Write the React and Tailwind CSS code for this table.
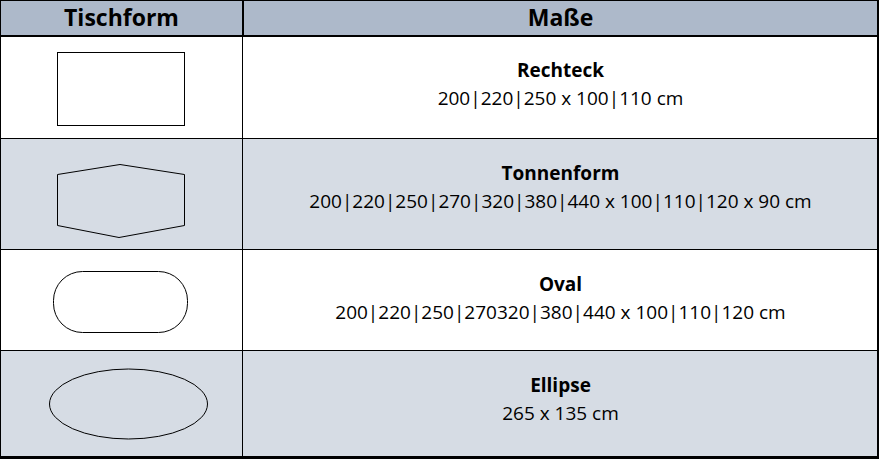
export default function App() {
  const rows = [
    { name: 'Rechteck', size: '200|220|250 x 100|110 cm', bg: 'bg-white', h: 'h-[102px]', svgH: 101, pb: 'pb-[7px]', shape: 'rect' },
    { name: 'Tonnenform', size: '200|220|250|270|320|380|440 x 100|110|120 x 90 cm', bg: 'bg-[#d6dce4]', h: 'h-[111px]', svgH: 110, pb: 'pb-[15px]', shape: 'barrel' },
    { name: 'Oval', size: '200|220|250|270320|380|440 x 100|110|120 cm', bg: 'bg-white', h: 'h-[101px]', svgH: 100, pb: 'pb-[5px]', shape: 'oval' },
    { name: 'Ellipse', size: '265 x 135 cm', bg: 'bg-[#d6dce4]', h: 'h-[105px]', svgH: 105, pb: 'pb-[9px]', shape: 'ellipse' },
  ];

  const Shape = ({ type, h }) => (
    <svg width="241" height={h} className="block">
      {type === 'rect' && <rect x="56.5" y="15.5" width="127" height="73" fill="none" stroke="#000" />}
      {type === 'barrel' && (
        <polygon points="56.5,35.5 119,25.5 183.5,35.5 183.5,86.5 118,98.5 56.5,86.5" fill="none" stroke="#000" />
      )}
      {type === 'oval' && <rect x="52.5" y="21.5" width="134" height="61" rx="29" fill="none" stroke="#000" />}
      {type === 'ellipse' && <ellipse cx="127.5" cy="53" rx="79" ry="35" fill="none" stroke="#000" />}
    </svg>
  );

  return (
    <div className="w-[881px] h-[459px] bg-white" style={{ fontFamily: '"Open Sans", sans-serif' }}>
      <div className="w-[879px] border-t border-l border-r-2 border-b-[3px] border-black text-black">
        <div className="grid grid-cols-[241px_2px_1fr] h-[36px] bg-[#adb9ca] border-b-2 border-black">
          <div className="flex items-center justify-center text-[23px] font-bold leading-none pb-[1px]">Tischform</div>
          <div className="bg-black" />
          <div className="flex items-center justify-center text-[23px] font-bold leading-none pb-[1px]">Maße</div>
        </div>
        {rows.map((r, i) => (
          <div key={r.name} className={`grid grid-cols-[241px_2px_1fr] ${r.h} ${r.bg} ${i < rows.length - 1 ? 'border-b border-black' : ''}`}>
            <div className="overflow-hidden">
              <Shape type={r.shape} h={r.svgH} />
            </div>
            <div className="bg-black w-[1px]" />
            <div className={`flex flex-col items-center justify-center text-[19px] leading-[28px] ${r.pb}`}>
              <div className="font-bold">{r.name}</div>
              <div>{r.size}</div>
            </div>
          </div>
        ))}
      </div>
    </div>
  );
}
